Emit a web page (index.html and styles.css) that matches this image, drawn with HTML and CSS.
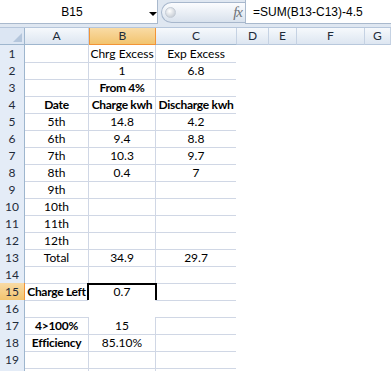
FILE: index.html
```html
<!DOCTYPE html>
<html lang="en">
<head>
  <meta charset="UTF-8" />
  <title>Sheet1</title>
  <link rel="stylesheet" href="styles.css">
</head>
<body>
  <div class="sheet">
    <!-- Formula bar -->
    <div class="formula-bar">
      <div class="name-box">
        <span class="name">B15</span>
        <span class="drop"></span>
      </div>
      <div class="pill">
        <span class="knob"></span>
        <span class="fx">fx</span>
      </div>
      <div class="formula">=SUM(B13-C13)-4.5</div>
    </div>

    <!-- Column headers -->
    <div class="col-heads">
      <div class="corner"><span class="tri"></span></div>
      <div class="ch col-a">A</div>
      <div class="ch col-b active">B</div>
      <div class="ch col-c">C</div>
      <div class="ch col-d">D</div>
      <div class="ch col-e">E</div>
      <div class="ch col-f">F</div>
      <div class="ch col-g">G</div>
    </div>

    <!-- Rows -->
    <div class="rows" id="rows"></div>
  </div>

  <script>
    const data = [
      ["", "Chrg Excess", "Exp Excess"],
      ["", "1", "6.8"],
      ["", "*From 4%", ""],
      ["*Date", "*Charge kwh", "*Discharge kwh"],
      ["5th", "14.8", "4.2"],
      ["6th", "9.4", "8.8"],
      ["7th", "10.3", "9.7"],
      ["8th", "0.4", "7"],
      ["9th", "", ""],
      ["10th", "", ""],
      ["11th", "", ""],
      ["12th", "", ""],
      ["Total", "34.9", "29.7"],
      ["", "", ""],
      ["*Charge Left", "0.7", ""],
      ["", "", ""],
      ["*4>100%", "15", ""],
      ["*Efficiency", "85.10%", ""],
      ["", "", ""],
      ["", "", ""],
    ];

    const rows = document.getElementById("rows");
    const cols = ["a", "b", "c"];

    data.forEach((row, i) => {
      const n = i + 1;
      const line = document.createElement("div");
      line.className = "row row-" + n;

      // row 20 is only a sliver at the bottom edge, no number shown
      const head = document.createElement("div");
      head.className = "rh" + (n == 15 ? " active" : "");
      head.textContent = n < 20 ? n : "";
      line.appendChild(head);

      row.forEach((val, j) => {
        const cell = document.createElement("div");
        cell.className = "cell cell-" + cols[j];
        if (val.startsWith("*")) {
          cell.classList.add("bold");
          val = val.slice(1);
        }
        cell.textContent = val;
        line.appendChild(cell);
      });

      rows.appendChild(line);
    });
  </script>
</body>
</html>
```

FILE: styles.css
```css
body {
  margin: 0;
  background-color: #fff;
  font-family: Lato, "Liberation Sans", sans-serif;
  color: #000;
}

.sheet {
  width: 391px;
  height: 371px;
  overflow: hidden;
}

/* ---- formula bar ---- */

.formula-bar {
  display: flex;
  height: 28px;
  background-color: #dfe7f1;
  box-sizing: border-box;
  border-bottom: 1px solid #b6c6db;
}

.name-box {
  position: relative;
  width: 158px;
  height: 24px;
  background-color: #fff;
  border-bottom: 1px solid #a9b9cd;
  border-right: 1px solid #a9b9cd;
  box-sizing: border-box;
}

.name {
  display: block;
  width: 144px;
  text-align: center;
  font-family: "Liberation Sans", sans-serif;
  font-size: 12px;
  line-height: 24px;
}

.drop {
  position: absolute;
  left: 149px;
  top: 12px;
  border-left: 4px solid transparent;
  border-right: 4px solid transparent;
  border-top: 4px solid #000;
}

.pill {
  display: flex;
  align-items: center;
  justify-content: space-between;
  margin: 2px 0 0 3px;
  width: 84px;
  height: 21px;
  border: 1px solid #a7b7cc;
  border-right: none;
  border-radius: 11px 0 0 11px;
  background: linear-gradient(#fbfcfe, #d9e2ed);
  padding: 0 3px 0 3px;
  box-sizing: border-box;
}

.knob {
  width: 9px;
  height: 9px;
  border-radius: 50%;
  background: radial-gradient(circle at 40% 35%, #fff, #b9c1cb);
  border: 1px solid #c4ccd6;
}

.fx {
  font-family: "Liberation Serif", serif;
  font-style: italic;
  font-size: 15px;
  color: #6e7378;
  letter-spacing: -1px;
}

.formula {
  flex: 1;
  height: 24px;
  background-color: #fff;
  border-bottom: 1px solid #a9b9cd;
  border-left: 1px solid #a9b9cd;
  box-sizing: border-box;
  font-family: "Liberation Sans", sans-serif;
  font-size: 12px;
  line-height: 24px;
  padding-left: 7px;
}

/* ---- column headers ---- */

.col-heads {
  display: grid;
  grid-template-columns: 25px 64px 67px 81px 32px 28px 68px 1fr;
  height: 17px;
}

.corner,
.ch {
  box-sizing: border-box;
  border-right: 1px solid #c5d2e3;
  border-bottom: 1px solid #9eb6ce;
  background: linear-gradient(#f6f9fc, #dde6f1);
  font-size: 12px;
  line-height: 16px;
  text-align: center;
  color: #1f2b3a;
}

.corner {
  position: relative;
  background: #dce6f3;
  border-right: 1px solid #9eb6ce;
}

.tri {
  position: absolute;
  right: 2px;
  bottom: 2px;
  border-left: 9px solid transparent;
  border-bottom: 9px solid #b4c6dc;
}

.ch.active {
  background: linear-gradient(#f9dba5, #f2c46f);
  border-bottom: 1px solid #f29436;
  border-right: 1px solid #f29436;
  border-left: 1px solid #f29436;
}

.col-d,
.col-e,
.col-f,
.col-g {
  border-bottom: 1px solid #b8c8dc;
}

/* ---- rows ---- */

.row {
  display: grid;
  grid-template-columns: 25px 64px 67px 80px;
  height: 17px;
}

.rh {
  box-sizing: border-box;
  background-color: #e4ecf7;
  border-right: 1px solid #9eb6ce;
  border-bottom: 1px solid #9eb6ce;
  font-size: 12px;
  line-height: 16px;
  padding-top: 1px;
  text-align: center;
  color: #1f2b3a;
}

.rh.active {
  background: linear-gradient(#f9dba5, #f2c46f);
  border-right: 1px solid #f29436;
  border-bottom: 1px solid #f29436;
}

.cell {
  box-sizing: border-box;
  border-bottom: 1px solid #d0d7e5;
  font-size: 12px;
  line-height: 16px;
  padding-top: 1px;
  text-align: center;
  white-space: nowrap;
  overflow: visible;
}

.cell-a,
.cell-b {
  border-right: 1px solid #d0d7e5;
}

.bold {
  font-weight: bold;
  letter-spacing: -0.3px;
}

/* active cell B15 */
.row-15 .cell-b {
  position: relative;
  border-bottom-color: #fff;
}

.row-15 .cell-b::before {
  content: "";
  position: absolute;
  left: -2px;
  right: -2px;
  top: 0;
  height: 15px;
  border: 2px solid #000;
  border-bottom: none;
}

.row-16 .cell-b,
.row-16 .cell-a {
  border-right-color: #fff;
}

.row-16 .cell-b {
  border-bottom-color: #fff;
}
```
